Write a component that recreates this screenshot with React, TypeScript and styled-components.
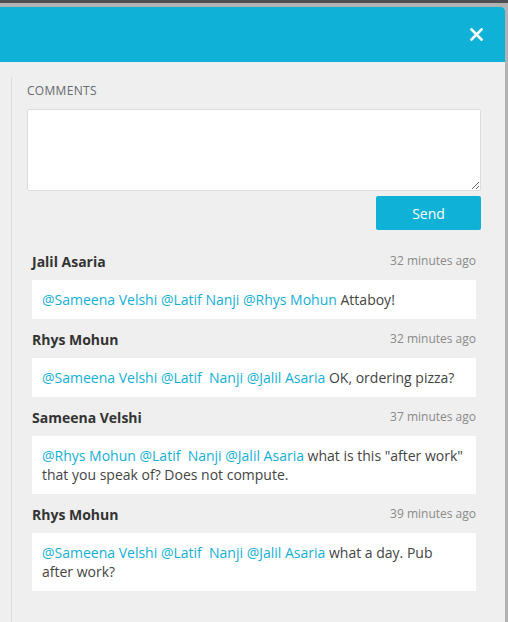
import React from "react";
import styled, { createGlobalStyle } from "styled-components";

const Global = createGlobalStyle`
  html, body { margin: 0; padding: 0; }
  body { font-family: "Open Sans", "Liberation Sans", sans-serif; background: #aeb0b2; }
  * { box-sizing: border-box; }
`;

const Backdrop = styled.div`
  border-top: 3px solid #4b4e53;
  background: #b2b2b3;
  padding: 4px 3px 0 0;
  min-height: 622px;
  display: flex;
  flex-direction: column;
`;

const Modal = styled.div`
  flex: 1;
  background: #efefef;
  border-top-right-radius: 4px;
  overflow: hidden;
  display: flex;
  flex-direction: column;
`;

const Header = styled.div`
  height: 55px;
  background: #0fb2d6;
  display: flex;
  align-items: center;
  justify-content: flex-end;
  padding-right: 22px;
`;

const CloseButton = styled.button`
  border: 0;
  background: none;
  padding: 0;
  width: 14px;
  height: 14px;
  display: flex;
  align-items: center;
  justify-content: center;
  cursor: pointer;
`;

const Body = styled.div`
  flex: 1;
  padding: 15px 24px 0 11px;
  display: flex;
`;

const Section = styled.div`
  flex: 1;
  border-left: 1px solid #dcdcdc;
  padding: 4px 0 20px 15px;
  display: flex;
  flex-direction: column;
`;

const Label = styled.div`
  font-size: 12px;
  line-height: 19px;
  color: #666a6e;
  text-transform: uppercase;
  letter-spacing: 0.3px;
`;

const TextArea = styled.textarea`
  margin-top: 9px;
  height: 82px;
  width: 100%;
  border: 1px solid #dddddd;
  border-radius: 2px;
  background: #fff;
  font-family: inherit;
  font-size: 14px;
  resize: vertical;
  outline: none;
`;

const Actions = styled.div`
  display: flex;
  justify-content: flex-end;
  margin-top: 5px;
`;

const SendButton = styled.button`
  width: 105px;
  height: 34px;
  border: 0;
  border-radius: 2px;
  background: #0fb2d6;
  color: #fff;
  font-family: inherit;
  font-size: 14px;
  cursor: pointer;
`;

const List = styled.div`
  margin-top: 11px;
  padding: 0 5px;
  display: flex;
  flex-direction: column;
`;

const CommentHead = styled.div`
  display: flex;
  justify-content: space-between;
  align-items: center;
  margin: 10px 0 9px;
  height: 20px;
`;

const Author = styled.span`
  font-size: 14px;
  font-weight: 700;
  color: #333;
`;

const Time = styled.span`
  font-size: 12px;
  color: #8a8a8a;
  margin-top: -2px;
`;

const Bubble = styled.div`
  background: #fff;
  padding: 10px 10px;
  font-size: 14px;
  line-height: 19px;
  color: #444;
`;

const Mention = styled.span`
  color: #13b0d5;
`;

type Comment = { author: string; time: string; mentions: string[]; text: string };

const comments: Comment[] = [
  { author: "Jalil Asaria", time: "32 minutes ago", mentions: ["@Sameena Velshi", "@Latif Nanji", "@Rhys Mohun"], text: "Attaboy!" },
  { author: "Rhys Mohun", time: "32 minutes ago", mentions: ["@Sameena Velshi", "@Latif\u00a0 Nanji", "@Jalil Asaria"], text: "OK, ordering pizza?" },
  { author: "Sameena Velshi", time: "37 minutes ago", mentions: ["@Rhys Mohun", "@Latif\u00a0 Nanji", "@Jalil Asaria"], text: "what is this \"after work\" that you speak of? Does not compute." },
  { author: "Rhys Mohun", time: "39 minutes ago", mentions: ["@Sameena Velshi", "@Latif\u00a0 Nanji", "@Jalil Asaria"], text: "what a day. Pub after work?" },
];

export default function App() {
  return (
    <>
      <Global />
      <Backdrop>
        <Modal>
          <Header>
            <CloseButton aria-label="Close">
              <svg width="13" height="13" viewBox="0 0 13 13">
                <path d="M1.5 1.5 L11.5 11.5 M11.5 1.5 L1.5 11.5" stroke="#fff" strokeWidth="2.6" strokeLinecap="square" />
              </svg>
            </CloseButton>
          </Header>
          <Body>
            <Section>
              <Label>Comments</Label>
              <TextArea />
              <Actions>
                <SendButton>Send</SendButton>
              </Actions>
              <List>
                {comments.map((c, i) => (
                  <div key={i}>
                    <CommentHead>
                      <Author>{c.author}</Author>
                      <Time>{c.time}</Time>
                    </CommentHead>
                    <Bubble>
                      {c.mentions.map((m, j) => (
                        <React.Fragment key={j}>
                          <Mention>{m}</Mention>{" "}
                        </React.Fragment>
                      ))}
                      {c.text}
                    </Bubble>
                  </div>
                ))}
              </List>
            </Section>
          </Body>
        </Modal>
      </Backdrop>
    </>
  );
}
